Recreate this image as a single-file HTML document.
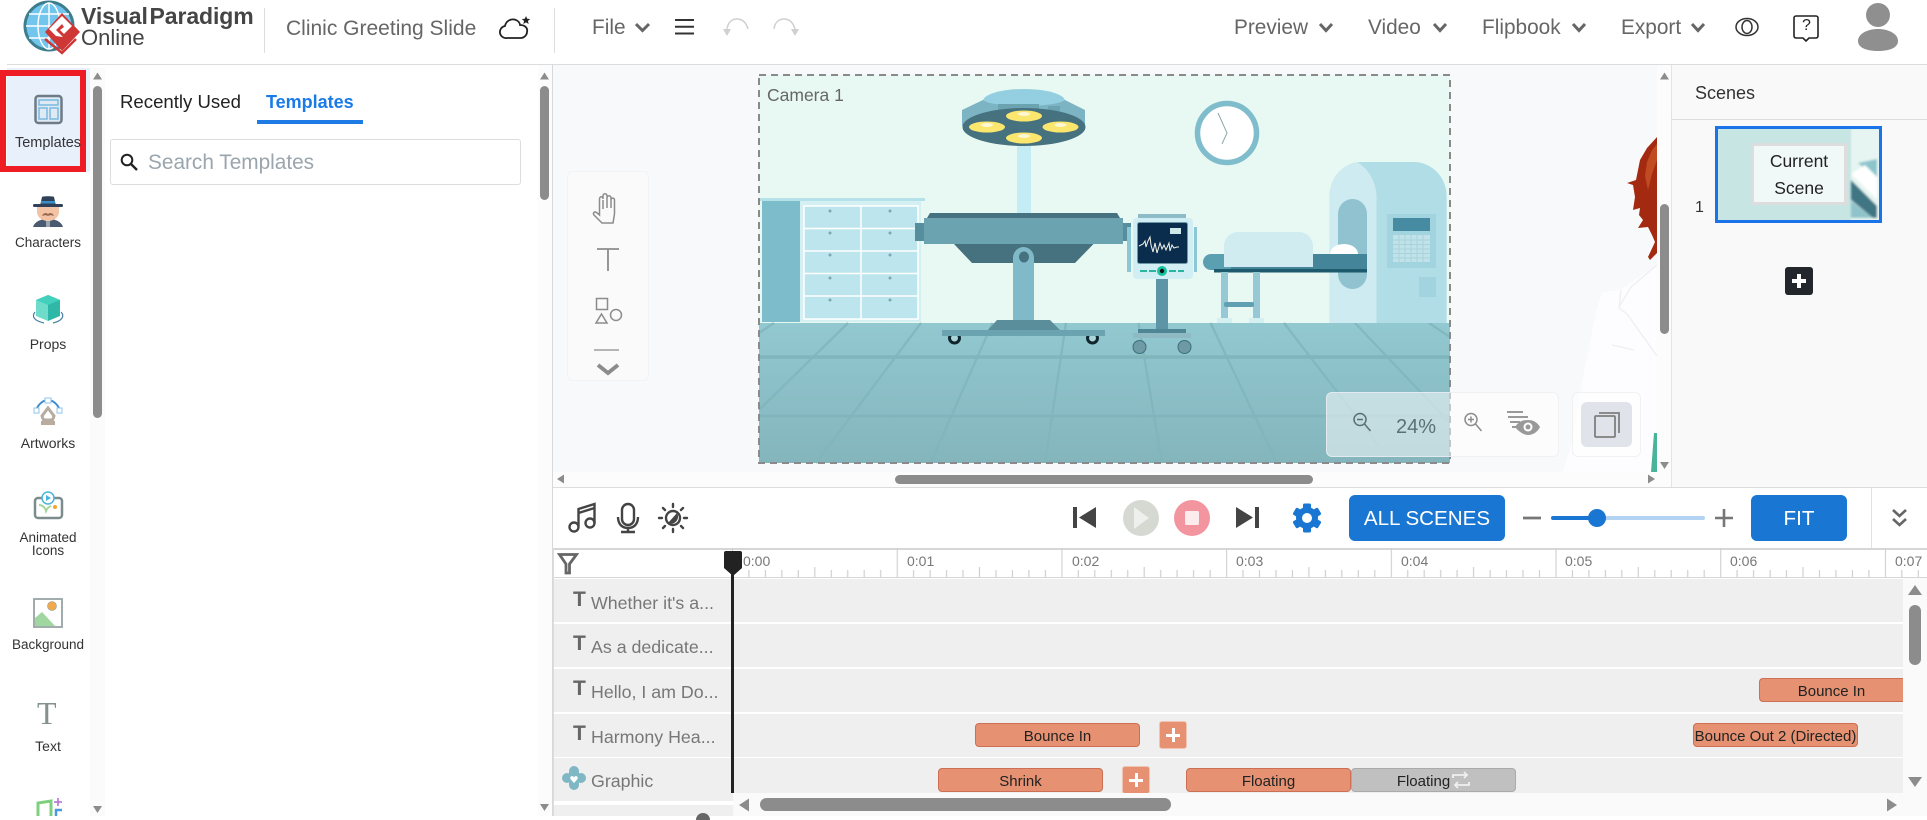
<!DOCTYPE html>
<html lang="en"><head><meta charset="utf-8"><title>Clinic Greeting Slide</title>
<style>
html,body{margin:0;padding:0;background:#fff}
body{width:1927px;height:816px;position:relative;overflow:hidden;font-family:"Liberation Sans",Arial,sans-serif;color:#333}
.a{position:absolute}
.t{position:absolute;white-space:nowrap;line-height:1}
.nav{font-size:20.800px;color:#666;top:17.500px}
.rl{position:absolute;left:0;width:96px;text-align:center;font-size:14px;color:#333;line-height:13px;white-space:nowrap}
.row{position:absolute;left:553px;width:1350px;height:43px;background:#efefef}
.lab{position:absolute;left:591px;font-size:17.800px;color:#777;white-space:nowrap;line-height:20px}
.T{position:absolute;left:573px;font-size:21px;font-weight:bold;color:#666;line-height:20px}
.blk{position:absolute;box-sizing:border-box;height:24px;background:#e59172;border:1px solid #cc7055;border-radius:4px;font-size:15px;color:#222;text-align:center;line-height:25px;white-space:nowrap}
.pl{position:absolute;background:#e59172;border:1px solid #f0c4b3;border-radius:3px;box-sizing:border-box;width:28px;height:28px}
.pl:before{content:"";position:absolute;left:6px;top:11.500px;width:14px;height:3px;background:#fff}
.pl:after{content:"";position:absolute;left:11.500px;top:6px;width:3px;height:14px;background:#fff}
.rt{position:absolute;font-size:14px;color:#777;top:554px;line-height:14px}
svg{position:absolute;overflow:visible}
</style></head>
<body>

<!-- left rail -->
<div class="a" style="left:0;top:65px;width:90px;height:751px;background:#fff"></div>
<div class="a" style="left:7px;top:68px;width:83px;height:104px;background:#e8f0fc"></div>
<div class="a" style="left:90px;top:68px;width:15px;height:748px;background:#fbfbfb"></div>
<div class="a" style="left:0;top:70px;width:86px;height:102px;box-sizing:border-box;border:6px solid #ee1c25;"></div>
<div class="a" style="left:93px;top:86px;width:9px;height:332px;background:#8c8c8c;border-radius:5px"></div>
<svg class="a" style="left:0;top:0" width="110" height="816">
<path d="M97.500 72.500l4.500 7h-9zM97.500 813l4.500-7h-9z" fill="#8c8c8c"/>
<!-- templates -->
<rect x="35.500" y="96" width="26" height="27" rx="3" fill="#dfeaf5" stroke="#6d7b86" stroke-width="2.500"/>
<path d="M39 100h19v5H39zM39 108h8v11h-8zM50 108h8v11h-8z" fill="none" stroke="#7ab9de" stroke-width="1.500"/>
<!-- characters -->
<path d="M33 227c2-6 8-8 15-8s13 2 15 8z" fill="#4a5a70"/>
<path d="M46 218h4v9h-4z" fill="#9aa6b0"/>
<path d="M37 204h22v8c0 5-5 9-11 9s-11-4-11-9z" fill="#f2c3a4"/>
<path d="M42 216c1-3 4-4 6-2 2-2 5-1 6 2-3-1-4-1-6 0-2-1-3-1-6 0z" fill="#9a6a50"/>
<path d="M40 206l2-9c0-1 12-1 12 0l2 9z" fill="#2f4058"/>
<rect x="33" y="204" width="30" height="3" rx="1.500" fill="#2f4058"/>
<rect x="41" y="201" width="14" height="2.500" fill="#3a8fc4"/>
<!-- props -->
<path d="M48 295l12 5v16l-12 5z" fill="#2fb8a7"/><path d="M48 295l-12 5v16l12 5z" fill="#6fdbcb"/><path d="M36 300l12-5 12 5-12 5z" fill="#41d0bc"/>
<path d="M35 312c-4 5 0 9 9 11M61 312c4 4 1 9-8 11" fill="none" stroke="#4a7fa5" stroke-width="1.200"/>
<!-- artworks -->
<path d="M36 410c3-7 8-10 12-10s9 3 12 10" fill="none" stroke="#3d8bd0" stroke-width="2"/>
<rect x="45" y="398" width="6" height="5" fill="#fff" stroke="#8cc4ea"/><rect x="34" y="408" width="5" height="5" fill="#fff" stroke="#8cc4ea"/><rect x="57" y="408" width="5" height="5" fill="#fff" stroke="#8cc4ea"/>
<path d="M48 408l6 8-1.500 4h-9L42 416z" fill="none" stroke="#b8aba0" stroke-width="3"/><rect x="41" y="421" width="14" height="4" fill="#b8aba0"/>
<!-- animated -->
<rect x="35" y="498" width="27" height="20" rx="3" fill="#fff" stroke="#7c8c8c" stroke-width="2.500"/>
<circle cx="48" cy="498" r="6" fill="#fff" stroke="#4ab5dc" stroke-width="1.500"/><path d="M46 495l5 3-5 3z" fill="#4ab5dc"/>
<path d="M39 505c3 0 6 2 7 6 1-3 3-4 5-5" fill="none" stroke="#9cd58f" stroke-width="1.800"/><circle cx="55" cy="507" r="2" fill="#f5a52e"/>
<!-- background -->
<rect x="34" y="599" width="28" height="28" fill="#fff" stroke="#97a3a3" stroke-width="1.800"/>
<path d="M35 626v-8l7-6 13 14z" fill="#a0d6a0"/><circle cx="52" cy="606" r="4.500" fill="#eeaa4c" stroke="#999" stroke-width=".6"/>
<!-- music -->
<path d="M38 816v-13l13-2v15" fill="none" stroke="#7fd07e" stroke-width="3"/>
<path d="M58 798v8M54 802h8" stroke="#b06ccf" stroke-width="1.500"/><path d="M56 816v-6h6" fill="none" stroke="#4a9ae0" stroke-width="2.500"/>
</svg>
<div class="t" style="left:37px;top:700px;width:22px;font:32px 'Liberation Serif',serif;color:#84918f;line-height:26px">T</div>
<div class="rl" style="top:137px;font-size:14.500px">Templates</div>
<div class="rl" style="top:236px;font-size:13.500px">Characters</div>
<div class="rl" style="top:338px">Props</div>
<div class="rl" style="top:437px">Artworks</div>
<div class="rl" style="top:531px;font-size:13.500px">Animated<br>Icons</div>
<div class="rl" style="top:638px;font-size:13.500px">Background</div>
<div class="rl" style="top:740px">Text</div>

<!-- panel -->
<div class="t" style="left:120px;top:92.500px;font-size:18.600px;color:#222">Recently Used</div>
<div class="t" style="left:266px;top:93px;font-size:18px;font-weight:bold;color:#1a7ae8">Templates</div>
<div class="a" style="left:257px;top:120px;width:106px;height:4px;background:#1e7be6"></div>
<div class="a" style="left:110px;top:139px;width:411px;height:46px;box-sizing:border-box;border:1px solid #ddd;border-radius:3px"></div>
<svg class="a" style="left:120px;top:153px" width="20" height="20"><circle cx="7" cy="7" r="5.300" fill="none" stroke="#222" stroke-width="2"/><path d="M11 11l6 6" stroke="#222" stroke-width="2.400"/></svg>
<div class="t" style="left:148px;top:153px;font-size:20.800px;color:#9aa5ad">Search Templates</div>
<div class="a" style="left:538px;top:65px;width:14px;height:751px;background:#fcfcfc"></div>
<div class="a" style="left:540px;top:86px;width:9px;height:114px;background:#8c8c8c;border-radius:5px"></div>
<svg class="a" style="left:538px;top:0" width="14" height="816"><path d="M6.500 72.500l4.500 7H2zM6.500 811l4.500-7H2z" fill="#8c8c8c"/></svg>
<div class="a" style="left:552px;top:65px;width:1px;height:751px;background:#d8d8d8"></div>

<!-- canvas area -->
<div class="a" style="left:553px;top:65px;width:1104px;height:407px;background:#f8f9fb;overflow:hidden"></div>
<svg class="a" style="left:0;top:0" width="1927" height="816">
<defs><linearGradient id="fl" x1="0" y1="0" x2="0" y2="1"><stop offset="0" stop-color="#92c8d0"/><stop offset="1" stop-color="#84b5bc"/></linearGradient></defs>
<!-- doctor -->
<path d="M1657 265l-37 25-18 2-6 20-6 30-10 50-8 50-9 30h94z" fill="#fdfdff"/>
<path d="M1621 290l-2 18 8 6 30 42M1657 265l-26 22-12 20M1612 345l22 5" fill="none" stroke="#eeeef3" stroke-width="1.300"/>
<path d="M1654 433h3v39h-6z" fill="#49b49a"/>
<path d="M1657 137L1647 148 1640 160 1636 180 1627 183 1633 185 1635 197 1633 210 1640 208 1639 215 1643 220 1638 228 1648 227 1652 235 1655 242 1648 257 1650 260 1657 253z" fill="#a32a10"/>
<path d="M1652 150l-5 12-2 14 3 14 4-16 5-14v-16z" fill="#c04a22"/>
<!-- camera bg -->
<rect x="759" y="75" width="691" height="248" fill="#e8f8f3"/>
<rect x="759" y="323" width="691" height="140" fill="url(#fl)"/>
<g stroke="#80b5bc" fill="none">
<path d="M759 357h691" stroke-width="3.500"/><path d="M759 416h691" stroke-width="2.800"/>
<g stroke-width="2.300" opacity=".85"><path d="M774 323l-15 10M848 323l-89 87M921 323l-105 140M992.500 323l-62 140M1066 323l-21 140M1138.500 323l23.500 140M1210.600 323l66.400 140M1284 323l108 140M1355 323l95 100M1429 323l21 14"/></g></g>
<!-- cabinet -->
<rect x="762" y="198" width="40" height="124" fill="#7dbcca"/>
<rect x="800" y="200" width="121" height="122" fill="#d5f0f3"/>
<path d="M760 198h165v3H760z" fill="#b5e2e8"/>
<g fill="#bde5ee" stroke="#fff" stroke-width="1.500"><path d="M804 206h57v22.500h-57zM861 206h57v22.500h-57zM804 228.500h57V251h-57zM861 228.500h57V251h-57zM804 251h57v22.500h-57zM861 251h57v22.500h-57zM804 273.500h57V296h-57zM861 273.500h57V296h-57zM804 296h57v23h-57zM861 296h57v23h-57z"/></g>
<g fill="#7aa9b5"><circle cx="830" cy="211" r="1.500"/><circle cx="890" cy="211" r="1.500"/><circle cx="830" cy="233" r="1.500"/><circle cx="890" cy="233" r="1.500"/><circle cx="830" cy="255" r="1.500"/><circle cx="890" cy="255" r="1.500"/><circle cx="830" cy="278" r="1.500"/><circle cx="890" cy="278" r="1.500"/><circle cx="830" cy="300" r="1.500"/><circle cx="890" cy="300" r="1.500"/></g>
<!-- lamp -->
<rect x="1017" y="146" width="14" height="68" fill="#c4ecf4"/>
<ellipse cx="1024" cy="101" rx="41" ry="12" fill="#93cfe0"/>
<path d="M983 100c10 8 72 8 82 0l20 10v16H962v-16z" fill="#7db4c4"/>
<path d="M998 104h41v18h-41zM1048 106h12v16h-12z" fill="#6ca3b1"/>
<ellipse cx="1024" cy="127" rx="61.500" ry="19" fill="#46717e"/>
<g fill="#fbe66e"><ellipse cx="1024" cy="116" rx="18" ry="5.500"/><ellipse cx="987" cy="127" rx="18" ry="5.500"/><ellipse cx="1060.500" cy="127" rx="18" ry="5.500"/><ellipse cx="1024" cy="138" rx="18" ry="5.500"/></g>
<g fill="#fff" opacity=".7"><ellipse cx="1024" cy="114" rx="6" ry="2"/><ellipse cx="987" cy="125" rx="6" ry="2"/><ellipse cx="1060.500" cy="125" rx="6" ry="2"/><ellipse cx="1024" cy="136" rx="6" ry="2"/></g>
<!-- clock -->
<circle cx="1227" cy="133" r="29.500" fill="#fff" stroke="#7fbccc" stroke-width="5.500"/>
<path d="M1218 113l9 20-5 11" fill="none" stroke="#8ba8a8" stroke-width="1"/>
<!-- table -->
<path d="M930 213h187l3 5h-193z" fill="#46717e"/>
<rect x="924" y="218" width="199" height="26" fill="#6ca3b1"/>
<rect x="915" y="223" width="9" height="18" fill="#558f9d"/><rect x="1123" y="223" width="8" height="18" fill="#558f9d"/>
<path d="M954 244h139.500l-18.500 19h-103z" fill="#46717e"/>
<path d="M1013 320v-62a10.500 11 0 0 1 21 0v62z" fill="#80bac8"/>
<ellipse cx="1024" cy="257" rx="5" ry="5.500" fill="#46717e"/>
<path d="M997 320h53l10 10h-72z" fill="#5a8e9a"/>
<circle cx="954.500" cy="338" r="5" fill="#a8d5dc" stroke="#12262e" stroke-width="3"/><circle cx="1092.500" cy="338" r="5" fill="#a8d5dc" stroke="#12262e" stroke-width="3"/>
<rect x="942" y="330" width="163" height="6" fill="#6ca3b1"/>
<!-- monitor -->
<rect x="1156" y="279" width="12" height="51" fill="#5d95a6"/>
<rect x="1138" y="329" width="48" height="4" fill="#4e8696"/>
<rect x="1133" y="333" width="58" height="5" fill="#8fb9c3"/>
<circle cx="1139.500" cy="347" r="6.500" fill="#6e9aa6" stroke="#3d6f7d"/><circle cx="1184.500" cy="347" r="6.500" fill="#6e9aa6" stroke="#3d6f7d"/>
<rect x="1127" y="227" width="4" height="45" fill="#8dc6d4"/><rect x="1194" y="227" width="3" height="45" fill="#8dc6d4"/>
<rect x="1138" y="214" width="48" height="5" fill="#8dbcc8"/>
<rect x="1133" y="218" width="60" height="61" rx="4" fill="#d0eef3"/>
<rect x="1137.500" y="222.500" width="50" height="41" rx="2" fill="#0a2c4d" stroke="#6b97a7"/>
<rect x="1170" y="228" width="11" height="6" fill="#cde8e8"/>
<path d="M1139 246l4-2 2-3 1 6 2-6 2-4 1 8 2 7 2-9 2 10 3-10 2 6 2-4 2 5 3-7 1 8 2-6 2 3 3-1 2 0" fill="none" stroke="#f4f4ea" stroke-width="1"/>
<path d="M1140 271h16M1169 271h15" stroke="#2ab5a0" stroke-width="2" stroke-dasharray="7 2"/>
<circle cx="1162" cy="271" r="5" fill="#16c1a0"/><circle cx="1162" cy="271" r="2.200" fill="#111"/>
<!-- MRI -->
<path d="M1329.600 323V196a32 34 0 0 1 32-34h52a33 34 0 0 1 33 34v127z" fill="#b1dde6"/>
<path d="M1329.600 323V196a32 34 0 0 1 28-33.500 33 40 0 0 1 19 33.500v127z" fill="#cdebf0"/>
<path d="M1338 214a14.500 15 0 0 1 29 0v60a14.500 15 0 0 1-29 0z" fill="#90c2cf"/>
<rect x="1387" y="214" width="49" height="54" fill="#a2d4df"/>
<rect x="1393" y="218" width="37" height="13" fill="#468ba1"/>
<rect x="1393" y="235" width="37" height="27" fill="#c0e2e8"/>
<path d="M1393 240h37M1393 244.500h37M1393 249h37M1393 253.500h37M1393 258h37M1399 235v27M1405 235v27M1411 235v27M1417 235v27M1423 235v27" stroke="#a9d3dc" stroke-width="1"/>
<rect x="1419" y="277" width="17" height="20" fill="#a2d4df"/>
<!-- bed -->
<path d="M1330 254a14 10 0 0 1 28 0z" fill="#fff"/>
<path d="M1211 254h20v16h-20a8 8 0 0 1 0-16z" fill="#5a9fb2"/>
<rect x="1231" y="254" width="136" height="15" fill="#458599"/>
<path d="M1224 267v-21a14 14 0 0 1 14-14h61a14 14 0 0 1 14 14v21z" fill="#d0ecf0"/>
<rect x="1214" y="269" width="153" height="3.500" fill="#1d5a6e"/>
<rect x="1221" y="272" width="7" height="48" fill="#96c9d5"/><rect x="1253" y="272" width="7" height="48" fill="#96c9d5"/>
<rect x="1224" y="302" width="30" height="5" rx="2" fill="#5fa0b3"/>
<rect x="1217" y="318" width="15" height="5" fill="#d5f0f0"/><rect x="1249" y="318" width="15" height="5" fill="#d5f0f0"/>
</svg>
<div class="t" style="left:767px;top:87px;font-size:17.500px;color:#666">Camera 1</div>
<svg class="a" style="left:0;top:0" width="1927" height="816">
<rect x="759" y="75" width="691" height="388" fill="none" stroke="#8a8a8a" stroke-width="2" stroke-dasharray="7 5"/>
</svg>

<!-- left tools -->
<div class="a" style="left:567px;top:171px;width:82px;height:210px;box-sizing:border-box;background:#fafafa;border:1px solid #f1f2f4;border-radius:6px"></div>
<svg class="a" style="left:590px;top:190px" width="40" height="200" fill="none" stroke="#8c8c8c" stroke-width="1.500">
<path d="M12 33l-8-8c-1.500-2 .5-4 2.500-2.500l3 2.500V9c0-3 3.500-3 3.500 0V6c0-3 4-3 4 0v2c0-3 4-3 4 0v2c0-2.500 3.500-2.500 3.500 0v14l-1.500 9zM13 10v9M17 8v10M21 9v9"/>
<path d="M7 59h22M18 59v22" stroke-width="1.800"/>
<rect x="6.500" y="108.500" width="11" height="11"/><path d="M11.500 124l5.500 9H6z"/><circle cx="26" cy="125" r="5.500"/>
<path d="M4 160h25" stroke-width="1.300"/>
<path d="M8 175l10 8 10-8" stroke-width="4"/>
</svg>

<!-- zoom panel -->
<div class="a" style="left:1326px;top:392px;width:233px;height:65px;box-sizing:border-box;background:rgba(255,255,255,.5);border:1px solid rgba(235,238,242,.8);border-radius:6px"></div>
<svg class="a" style="left:1352px;top:411px" width="30" height="30" fill="none" stroke="#5b7075" stroke-width="1.500"><circle cx="8" cy="8.500" r="6"/><path d="M5 8.500h6M12.500 13l6 7"/></svg>
<div class="t" style="left:1396px;top:417px;font-size:20px;color:#5b7075">24%</div>
<svg class="a" style="left:1463px;top:411px" width="30" height="30" fill="none" stroke="#8c8c8c" stroke-width="1.500"><circle cx="8" cy="8.500" r="6"/><path d="M5 8.500h6M8 5.500v6M12.500 13l6 7"/></svg>
<svg class="a" style="left:1505px;top:410px" width="40" height="30"><path d="M2 2h16M3 7h20M5 12h10M7 17h6" stroke="#999" stroke-width="2" fill="none"/><path d="M10 17c4-6 8-7 13-7s9 2 12 7c-3 6-8 8-12 8s-9-3-13-8z" fill="#999"/><circle cx="23" cy="17" r="4.500" fill="#fff"/><circle cx="23" cy="17" r="2.500" fill="#999"/></svg>
<div class="a" style="left:1572px;top:392px;width:69px;height:65px;box-sizing:border-box;background:rgba(255,255,255,.5);border:1px solid #f0f1f3;border-radius:6px"></div>
<div class="a" style="left:1581px;top:402px;width:51px;height:45px;background:#e0e3ea;border-radius:6px"></div>
<svg class="a" style="left:1594px;top:411px" width="28" height="28" fill="none" stroke="#7f7f7f" stroke-width="1.800"><rect x="1" y="5" width="20" height="21" rx="1"/><path d="M5 2h20v20"/></svg>

<!-- canvas scrollbars -->
<div class="a" style="left:1657px;top:65px;width:14px;height:422px;background:#fcfcfc"></div>
<div class="a" style="left:553px;top:472px;width:1118px;height:15px;background:#fcfcfc"></div>
<div class="a" style="left:1660px;top:204px;width:9px;height:130px;background:#8c8c8c;border-radius:5px"></div>
<div class="a" style="left:895px;top:475px;width:418px;height:9px;background:#8c8c8c;border-radius:5px"></div>
<svg class="a" style="left:0;top:0" width="1927" height="816"><path d="M1664.500 72.500l4.500 7h-9zM1664.500 469l4.500-7h-9zM557 479l7-4.500v9zM1655 479l-7-4.500v9z" fill="#8c8c8c"/></svg>

<!-- scenes -->
<div class="a" style="left:1671px;top:65px;width:256px;height:422px;background:#f9f9f9;border-left:1px solid #e4e4e4;box-sizing:border-box"></div>
<div class="a" style="left:1671px;top:119px;width:256px;height:1px;background:#ddd"></div>
<div class="t" style="left:1695px;top:84px;font-size:18px;color:#333">Scenes</div>
<div class="t" style="left:1695px;top:200px;font-size:16px;color:#333">1</div>
<div class="a" style="left:1715px;top:126px;width:167px;height:97px;box-sizing:border-box;border:3px solid #1a73e8;overflow:hidden;background:#c7e5e3">
<svg class="a" style="left:0;top:0" width="161" height="91"><defs><filter id="bl"><feGaussianBlur stdDeviation="1"/></filter></defs><g filter="url(#bl)"><rect x="133" y="0" width="30" height="93" fill="#e6f5f1"/><path d="M140 34l19-4v20z" fill="#8cc4cc"/><path d="M133 45l26 25V48L147 36z" fill="#fff"/><path d="M133 51l26 26v12h-4l-22-18z" fill="#417584"/><path d="M133 72l22 17h-22z" fill="#8fc3cb"/></g></svg>
<div class="a" style="left:33px;top:14px;width:96px;height:62px;box-sizing:border-box;background:#f1f8f8;border:3px solid #ddd;text-align:center;font-size:17.500px;line-height:27px;color:#222;padding-top:2px">Current<br>Scene</div>
</div>
<div class="a" style="left:1785px;top:267px;width:28px;height:28px;background:#23262b;border-radius:3px"></div>
<div class="a" style="left:1792px;top:279px;width:14px;height:4px;background:#fff"></div>
<div class="a" style="left:1797px;top:274px;width:4px;height:14px;background:#fff"></div>

<!-- header -->
<div class="a" style="left:7px;top:64px;width:1920px;height:1px;background:#dcdcdc"></div>
<svg class="a" style="left:0;top:0" width="90" height="60">
<circle cx="49" cy="26" r="24" fill="#72c6ee" stroke="#3d7e8e" stroke-width="3"/>
<g fill="none" stroke="#fff" stroke-width="1.400"><ellipse cx="49" cy="26" rx="11" ry="23"/><path d="M26 26h46M29 14h40M29 38h40M49 3v46"/></g>
<path d="M62 13l18 19-18 19-17-19z" fill="#cf3636"/><path d="M56 36l-7-7 13-13 10 10-8 8-4-4 4-3-2-3-6 6 7 7z" fill="#fff"/>
<path d="M45 39l17 14 14-14" fill="none" stroke="#cf3636" stroke-width="2.500"/>
</svg>
<div class="t" style="left:81px;top:5px;font-size:23px;font-weight:bold;color:#454545;letter-spacing:-.1px">Visual&#8202;Paradigm</div>
<div class="t" style="left:81px;top:27px;font-size:22px;color:#454545">Online</div>
<div class="a" style="left:264px;top:8px;width:1px;height:45px;background:#ddd"></div>
<div class="t" style="left:286px;top:17.500px;font-size:21px;color:#666">Clinic Greeting Slide</div>
<svg class="a" style="left:497px;top:14px" width="36" height="26"><path d="M10 24a6 6 0 0 1-2-12c1-5 6-8 11-6 2 1 4 3 4 5 5 0 8 3 7 7 0 3-3 6-6 6z" fill="none" stroke="#222" stroke-width="1.800"/><path d="M29 2l1.200 2.800 3 .2-2.300 2 .8 3-2.700-1.600-2.700 1.600.8-3-2.300-2 3-.2z" fill="#222"/></svg>
<div class="a" style="left:554px;top:8px;width:1px;height:45px;background:#ddd"></div>
<div class="t nav" style="left:592px">File</div>
<svg class="a" style="left:0;top:0" width="1927" height="60" fill="none">
<g stroke="#666" stroke-width="3"><path d="M636 24l6.500 6.500 6.500-6.500M1320 24l6 6.500 6-6.500M1434 24l6 6.500 6-6.500M1573 24l6 6.500 6-6.500M1692 24l6 6.500 6-6.500"/></g>
<path d="M675 20h19M675 26.700h19M675 33.500h19" stroke="#333" stroke-width="2"/>
<path d="M727 29c1-7 5-10 10-10s9 3 11 10" stroke="#d0d0d0" stroke-width="1.500"/><path d="M723 29h8l-4 7z" fill="#d0d0d0"/>
<path d="M774 29c1-7 5-10 10-10s9 3 11 10" stroke="#d0d0d0" stroke-width="1.500"/><path d="M791 29h8l-4 7z" fill="#d0d0d0"/>
<ellipse cx="1747" cy="27" rx="11" ry="8.500" stroke="#333" stroke-width="1.500"/><ellipse cx="1747" cy="27" rx="5" ry="6.500" stroke="#333" stroke-width="1.500"/>
<path d="M1796 16h20a2 2 0 0 1 2 2v18a2 2 0 0 1-2 2h-7l-3 3-3-3h-7a2 2 0 0 1-2-2V18a2 2 0 0 1 2-2z" stroke="#222" stroke-width="1.600"/>
<ellipse cx="1878" cy="15" rx="12" ry="12" fill="#8f8f8f"/><path d="M1858 41c0-7 9-12 20-12s20 5 20 12-9 10-20 10-20-3-20-10z" fill="#8f8f8f"/>
</svg>
<div class="t" style="left:1802px;top:18px;font-size:16px;color:#222">?</div>
<div class="t nav" style="left:1234px">Preview</div>
<div class="t nav" style="left:1368px">Video</div>
<div class="t nav" style="left:1482px">Flipbook</div>
<div class="t nav" style="left:1621px">Export</div>

<!-- toolbar -->
<div class="a" style="left:553px;top:487px;width:1374px;height:1px;background:#dcdcdc"></div>
<svg class="a" style="left:0;top:480px" width="1927" height="70" fill="none">
<g stroke="#444" stroke-width="2.400"><circle cx="574" cy="47" r="4.500"/><circle cx="590" cy="43" r="4.500"/><path d="M578.500 46V29l16-5v19M578.500 33l16-5"/>
<rect x="622" y="24" width="12" height="21" rx="6"/><path d="M618 37c0 7 4 11 10 11s10-4 10-11M628 49v3M621 52h14"/></g>
<g stroke="#444" stroke-width="2.400" stroke-linecap="round"><circle cx="673" cy="38" r="7"/><path d="M673 24v3M673 49v3M659 38h3M684 38h3M663 28l2 2M681 46l2 2M663 48l2-2M681 30l2-2"/></g><path d="M668 43l9-10a7 7 0 0 1-9 10z" fill="#444"/>
<rect x="1073" y="27" width="4" height="21" fill="#444"/><path d="M1096 27v21l-17-10.500z" fill="#444"/>
<circle cx="1141" cy="38" r="18" fill="#d5d9d2"/><path d="M1134 27l15 11-15 11z" fill="#edf0ec"/>
<circle cx="1192" cy="38" r="18" fill="#f2959f"/><rect x="1185" y="31" width="14" height="14" rx="1.500" fill="#fcecee"/>
<path d="M1236 27v21l17-10.500z" fill="#444"/><rect x="1255" y="27" width="4" height="21" fill="#444"/>
<g fill="#1976d2"><circle cx="1307" cy="38" r="11"/>
<rect x="1303" y="23.500" width="8" height="29" rx="1.500"/>
<rect x="1303" y="23.500" width="8" height="29" rx="1.500" transform="rotate(60 1307 38)"/>
<rect x="1303" y="23.500" width="8" height="29" rx="1.500" transform="rotate(120 1307 38)"/></g><circle cx="1307" cy="38" r="5" fill="#fff"/>
<path d="M1523 38h18" stroke="#777" stroke-width="2.800"/>
<path d="M1553 38h44" stroke="#1976d2" stroke-width="4" stroke-linecap="round"/><path d="M1597 38h106" stroke="#b3d3f2" stroke-width="4" stroke-linecap="round"/><circle cx="1597" cy="38" r="9" fill="#1976d2"/>
<path d="M1715 38h18M1724 29v18" stroke="#777" stroke-width="2.600"/>
<path d="M1893 30l6.500 6 6.500-6M1893 39l6.500 6 6.500-6" stroke="#666" stroke-width="2.600"/>
</svg>
<div class="a" style="left:1349px;top:495px;width:156px;height:46px;background:#1976d2;border-radius:6px;color:#fff;font-size:20.600px;text-align:center;line-height:47px">ALL SCENES</div>
<div class="a" style="left:1751px;top:495px;width:96px;height:46px;background:#1976d2;border-radius:6px;color:#fff;font-size:20.600px;text-align:center;line-height:47px">FIT</div>
<div class="a" style="left:1871px;top:488px;width:1px;height:60px;background:#e2e2e2"></div>

<!-- ruler -->
<div class="a" style="left:553px;top:548px;width:1374px;height:1.500px;background:#d6d6d6"></div>
<div class="a" style="left:553px;top:576.500px;width:1374px;height:1.500px;background:#d6d6d6"></div>
<svg class="a" style="left:0;top:0" width="1927" height="816">
<defs><pattern id="tk" x="732" y="548" width="164.700" height="30" patternUnits="userSpaceOnUse">
<path d="M.5 0v30M16.900 22v8M33.400 22v8M49.900 22v8M66.300 22v8M82.800 19v11M99.300 22v8M115.700 22v8M132.200 22v8M148.700 22v8" stroke="#cfcfcf" stroke-width="1.200"/></pattern></defs>
<rect x="732" y="548" width="1195" height="29" fill="url(#tk)"/>
<path d="M559.500 554.500h17l-7 9.500v9h-3.500v-9z" fill="none" stroke="#666" stroke-width="2.800"/>
</svg>
<div class="rt" style="left:743px">0:00</div><div class="rt" style="left:907px">0:01</div><div class="rt" style="left:1072px">0:02</div><div class="rt" style="left:1236px">0:03</div><div class="rt" style="left:1401px">0:04</div><div class="rt" style="left:1565px">0:05</div><div class="rt" style="left:1730px">0:06</div><div class="rt" style="left:1895px">0:07</div>

<!-- tracks -->
<div class="row" style="top:579px"></div>
<div class="row" style="top:624px"></div>
<div class="row" style="top:669px"></div>
<div class="row" style="top:714px"></div>
<div class="row" style="top:758px;height:43px"></div>
<div class="row" style="top:805px;height:11px;width:180px"></div>
<div class="a" style="left:553px;top:548px;width:1px;height:268px;background:#dcdcdc"></div>
<div class="T" style="top:590px">T</div><div class="lab" style="top:592.500px">Whether it's a...</div>
<div class="T" style="top:634px">T</div><div class="lab" style="top:636.500px">As a dedicate...</div>
<div class="T" style="top:679px">T</div><div class="lab" style="top:681.500px">Hello, I am Do...</div>
<div class="T" style="top:724px">T</div><div class="lab" style="top:726.500px">Harmony Hea...</div>
<svg class="a" style="left:562px;top:766px" width="24" height="24"><g fill="#7fb8c4"><circle cx="12" cy="5" r="5"/><circle cx="12" cy="19" r="5"/><circle cx="5" cy="12" r="5"/><circle cx="19" cy="12" r="5"/><rect x="7" y="5" width="10" height="14"/></g><path d="M12 17l-3.500-4c-1.300-2.700 2.200-4 3.500-1.800 1.300-2.200 4.800-.9 3.500 1.800z" fill="#fff"/></svg>
<div class="lab" style="top:770.500px">Graphic</div>
<div class="a" style="left:733px;top:579px;width:1px;height:237px;background:#e8e8e8"></div>
<div class="a" style="left:696px;top:813px;width:14px;height:7px;background:#666;border-radius:7px 7px 0 0"></div>

<div class="blk" style="left:975px;top:723px;width:165px">Bounce In</div>
<div class="pl" style="left:1159px;top:721px"></div>
<div class="blk" style="left:938px;top:768px;width:165px">Shrink</div>
<div class="pl" style="left:1122px;top:766px"></div>
<div class="blk" style="left:1186px;top:768px;width:165px">Floating</div>
<div class="blk" style="left:1351px;top:768px;width:165px;background:#c0c0c0;border-color:#aaa;padding-right:20px">Floating</div>
<svg class="a" style="left:1452px;top:770px" width="18" height="20" fill="none" stroke="#f0f0f0" stroke-width="1.800"><path d="M1 8V5h13M12 2l3 3-3 3M17 12v3H4M6 12l-3 3 3 3"/></svg>
<div class="blk" style="left:1759px;top:678px;width:144px;border-right:0;border-radius:4px 0 0 4px">Bounce In</div>
<div class="blk" style="left:1693px;top:723px;width:165px;font-size:15px">Bounce Out 2 (Directed)</div>

<!-- timeline scrollbars -->
<div class="a" style="left:733px;top:793px;width:1194px;height:23px;background:#fafafa"></div>
<div class="a" style="left:1903px;top:578px;width:24px;height:238px;background:#fafafa"></div>
<div class="a" style="left:760px;top:798px;width:411px;height:13px;background:#8c8c8c;border-radius:7px"></div>
<div class="a" style="left:1909px;top:605px;width:12px;height:60px;background:#8c8c8c;border-radius:6px"></div>
<svg class="a" style="left:0;top:0" width="1927" height="816"><path d="M1915 585l7 10h-14zM1915 787l7-10h-14zM739 805l10-6.500v13zM1897 805l-10-6.500v13z" fill="#8c8c8c"/></svg>

<!-- playhead -->
<div class="a" style="left:730.500px;top:570px;width:3px;height:223px;background:#222"></div>
<svg class="a" style="left:724px;top:551px" width="18" height="26"><path d="M2 0h14a2 2 0 0 1 2 2v15l-9 8-9-8V2a2 2 0 0 1 2-2z" fill="#222"/></svg>
</body></html>
